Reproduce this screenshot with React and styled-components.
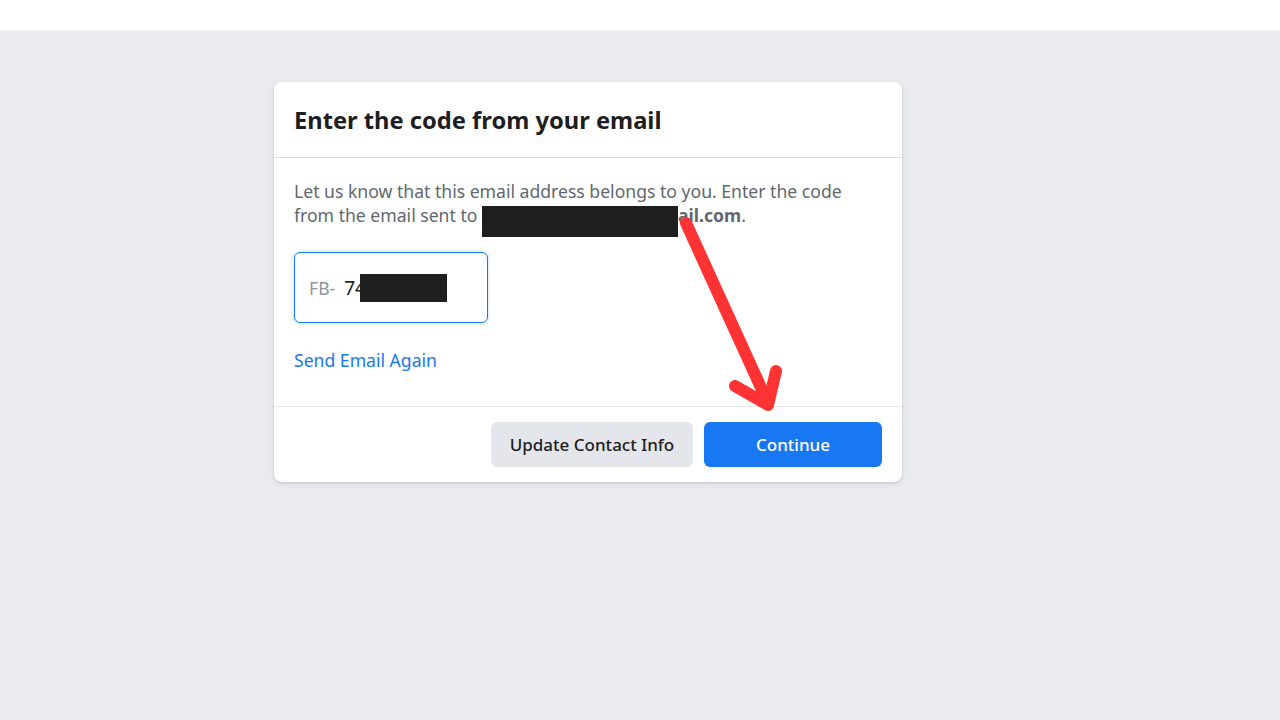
import React from 'react'
import styled, { createGlobalStyle } from 'styled-components'

const GlobalStyle = createGlobalStyle`
  body {
    margin: 0;
    font-family: "Noto Sans", "Open Sans", Arial, sans-serif;
    background: #e9ebee;
  }
`;

const TopBar = styled.div`
  height: 30px;
  background: #fff;
  border-bottom: 1px solid #f0f1f3;
`;

const Page = styled.div`
  height: 689px;
  padding-top: 51px;
  padding-left: 274px;
  box-sizing: border-box;
  position: relative;
`;

const Card = styled.div`
  width: 628px;
  background: #fff;
  border-radius: 8px;
  box-shadow: 0 1px 3px rgba(0, 0, 0, 0.12), 0 2px 6px rgba(0, 0, 0, 0.06);
`;

const Header = styled.div`
  height: 75px;
  padding: 0 20px;
  display: flex;
  align-items: center;
  border-bottom: 1px solid #dadde1;
`;

const Title = styled.h2`
  margin: 0;
  font-size: 23.7px;
  font-weight: 700;
  color: #1c1e21;
`;

const Body = styled.div`
  padding: 21px 20px 34px;
  border-bottom: 1px solid #e4e6eb;
`;

const Text = styled.p`
  margin: 0;
  max-width: 570px;
  font-size: 17.6px;
  line-height: 24px;
  color: #606770;
`;

const Redact = styled.span`
  display: inline-block;
  width: 196px;
  height: 31px;
  background: #1f1f1f;
  vertical-align: -3px;
  margin: -12px 0;
`;

const Strong = styled.b`
  color: #606770;
`;

const CodeBox = styled.div`
  margin-top: 25px;
  width: 194px;
  height: 71px;
  box-sizing: border-box;
  border: 1px solid #1877f2;
  border-radius: 6px;
  box-shadow: 0 0 0 2px #e7f3ff;
  display: flex;
  align-items: center;
  padding-left: 14px;
  gap: 9px;
`;

const Prefix = styled.span`
  font-size: 17.6px;
  color: #90949c;
`;

const Code = styled.span`
  font-size: 19px;
  color: #1c1e21;
  display: flex;
  align-items: center;
`;

const CodeRedact = styled.span`
  width: 87px;
  height: 28px;
  margin-left: -6px;
  background: #1f1f1f;
`;

const Link = styled.a`
  display: inline-block;
  margin-top: 25px;
  font-size: 17.6px;
  line-height: 24px;
  color: #1877f2;
  text-decoration: none;
`;

const Footer = styled.div`
  display: flex;
  justify-content: flex-end;
  gap: 11px;
  padding: 15px 20px 15px;
`;

const Button = styled.button`
  height: 45px;
  width: ${p => p.w}px;
  border: none;
  border-radius: 6px;
  font-family: inherit;
  font-size: 17px;
  font-weight: 500;
  background: ${p => (p.primary ? '#1877f2' : '#e4e6eb')};
  color: ${p => (p.primary ? '#fff' : '#1c1e21')};
`;

const ArrowSvg = styled.svg`
  position: absolute;
  left: 0;
  top: -30px;
  pointer-events: none;
`;

export default function App() {
  return (
    <>
      <GlobalStyle />
      <TopBar />
      <Page>
        <Card>
          <Header>
            <Title>Enter the code from your email</Title>
          </Header>
          <Body>
            <Text>
              Let us know that this email address belongs to you. Enter the code from the email sent to{' '}
              <Redact />
              <Strong>ail.com</Strong>.
            </Text>
            <CodeBox>
              <Prefix>FB-</Prefix>
              <Code>
                74
                <CodeRedact />
              </Code>
            </CodeBox>
            <Link href="#">Send Email Again</Link>
          </Body>
          <Footer>
            <Button w={202}>Update Contact Info</Button>
            <Button primary w={178}>Continue</Button>
          </Footer>
        </Card>
        <ArrowSvg width="1280" height="720">
          <g stroke="#ff3333" strokeWidth="12" strokeLinecap="round" strokeLinejoin="round" fill="none">
            <line x1="686" y1="222" x2="768" y2="402" />
            <polyline points="735,385 768,404 776,370" />
          </g>
        </ArrowSvg>
      </Page>
    </>
  )
}
